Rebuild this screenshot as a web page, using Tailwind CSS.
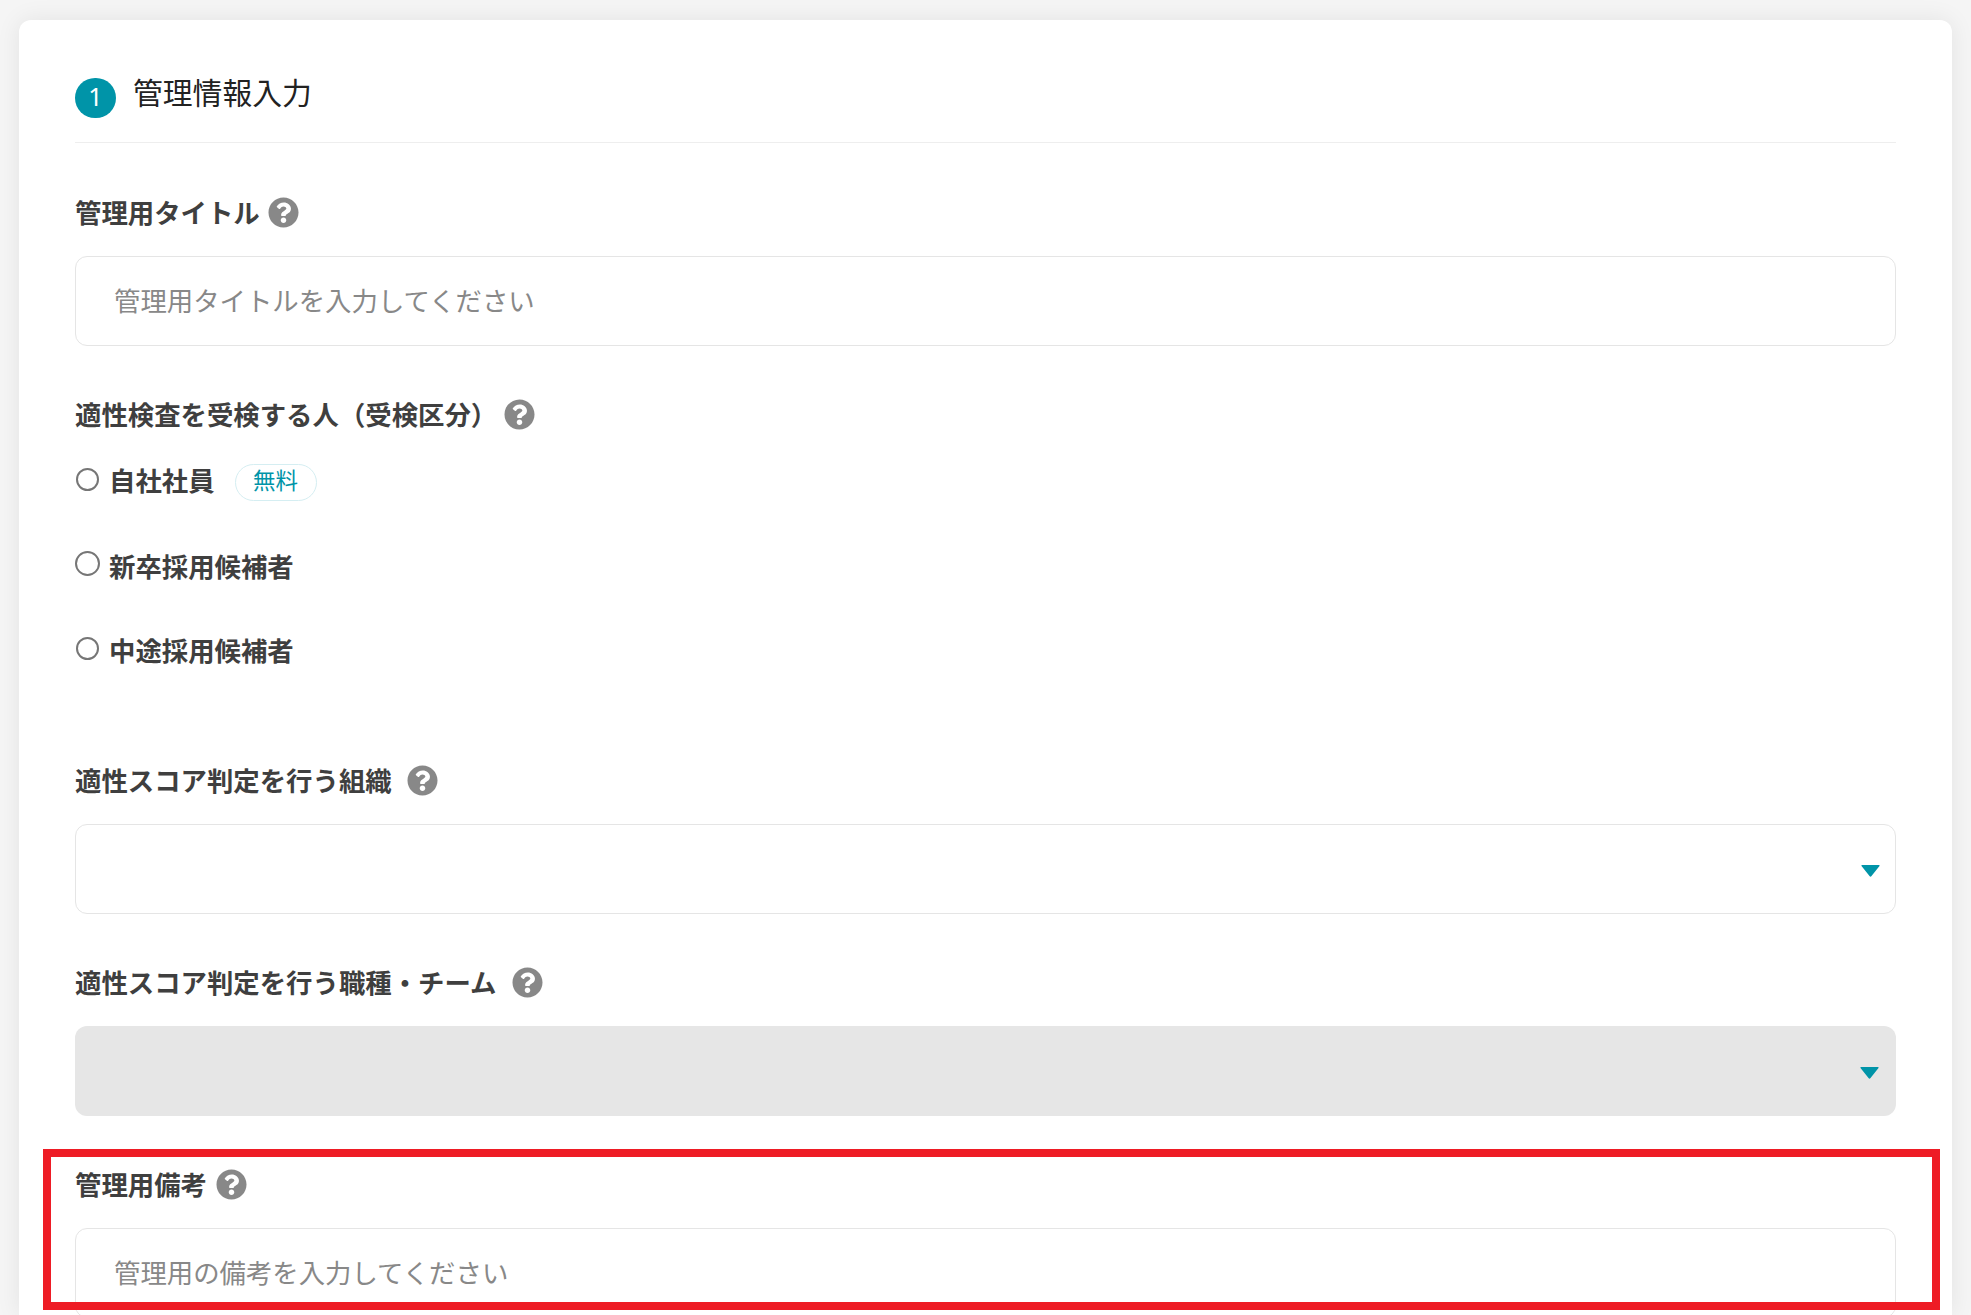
<!DOCTYPE html>
<html lang="ja">
<head>
    <meta charset="UTF-8">
    <meta name="viewport" content="width=device-width, initial-scale=1.0">
    <title>管理情報入力</title>
    <script src="https://cdn.jsdelivr.net/npm/@tailwindcss/browser@4"></script>
</head>
<body class="relative h-[1315px] overflow-hidden bg-[#f5f5f5] font-['Noto_Sans_CJK_JP','Noto_Sans',sans-serif] text-[#3f3f3f]">
    <main class="ml-[19px] mt-[20px] w-[1933px] h-[1295px] overflow-hidden rounded-t-[12px] bg-white px-[56px] pt-[58px] shadow-[0_0_24px_rgba(0,0,0,0.08)]">

        <!-- Section heading -->
        <div class="flex h-[65px] items-start border-b border-[#eeeeee]">
            <span class="flex h-[40px] w-[41px] items-center justify-center rounded-full bg-[#0094a8] pb-[4px] font-['Noto_Sans',sans-serif] text-[25px] leading-none text-white">1</span>
            <h2 class="ml-[17px] -mt-[7px] text-[29.8px] leading-[40px] font-normal text-[#222]">管理情報入力</h2>
        </div>

        <!-- Title -->
        <div class="mt-[54px] flex h-[30px] items-center">
            <label class="text-[26.4px] leading-[30px] font-bold">管理用タイトル</label>
            <svg class="ml-[8px] h-[31px] w-[31px] fill-[#888]" viewBox="0 0 512 512"><path d="M504 256c0 136.997-111.043 248-248 248S8 392.997 8 256C8 119.083 119.043 8 256 8s248 111.083 248 248zM262.655 90c-54.497 0-89.255 22.957-116.549 63.758-3.536 5.286-2.353 12.415 2.715 16.258l34.699 26.31c5.205 3.947 12.621 3.008 16.665-2.122 17.864-22.658 30.113-35.797 57.303-35.797 20.429 0 45.698 13.148 45.698 32.958 0 14.976-12.363 22.667-32.534 33.976C247.128 238.528 216 254.941 216 296v4c0 6.627 5.373 12 12 12h56c6.627 0 12-5.373 12-12v-1.333c0-28.462 83.186-29.647 83.186-106.667 0-58.002-60.165-102-116.531-102zM256 338c-25.365 0-46 20.635-46 46 0 25.364 20.635 46 46 46s46-20.636 46-46c0-25.365-20.635-46-46-46z"/></svg>
        </div>
        <input type="text" placeholder="管理用タイトルを入力してください" class="mt-[29px] block h-[90px] w-full rounded-[12px] border-[1.5px] border-[#e5e5e5] bg-white px-[38px] pb-[4px] text-[26.4px] placeholder:text-[#888]">

        <!-- Examinee type -->
        <div class="mt-[53px] flex h-[30px] items-center">
            <label class="text-[26.4px] leading-[30px] font-bold">適性検査を受検する人（受検区分）</label>
            <svg class="ml-[7px] h-[31px] w-[31px] fill-[#888]" viewBox="0 0 512 512"><path d="M504 256c0 136.997-111.043 248-248 248S8 392.997 8 256C8 119.083 119.043 8 256 8s248 111.083 248 248zM262.655 90c-54.497 0-89.255 22.957-116.549 63.758-3.536 5.286-2.353 12.415 2.715 16.258l34.699 26.31c5.205 3.947 12.621 3.008 16.665-2.122 17.864-22.658 30.113-35.797 57.303-35.797 20.429 0 45.698 13.148 45.698 32.958 0 14.976-12.363 22.667-32.534 33.976C247.128 238.528 216 254.941 216 296v4c0 6.627 5.373 12 12 12h56c6.627 0 12-5.373 12-12v-1.333c0-28.462 83.186-29.647 83.186-106.667 0-58.002-60.165-102-116.531-102zM256 338c-25.365 0-46 20.635-46 46 0 25.364 20.635 46 46 46s46-20.636 46-46c0-25.365-20.635-46-46-46z"/></svg>
        </div>
        <div class="mt-[10px] flex flex-col">
            <div class="flex h-[86px] items-center">
                <span class="ml-[1px] -mt-[6px] h-[23px] w-[23px] rounded-full border-2 border-[#767676]"></span>
                <span class="ml-[10px] -mt-[4px] text-[26.4px] font-bold">自社社員</span>
                <span class="ml-[20px] flex h-[37px] w-[82px] items-center justify-center rounded-full border border-[#d5eef2] pb-[4px] text-[22.5px] text-[#0094a8]">無料</span>
            </div>
            <div class="flex h-[84px] items-center">
                <span class="-mt-[7px] h-[25px] w-[25px] rounded-full border-2 border-[#767676]"></span>
                <span class="ml-[9px] -mt-[2px] text-[26.4px] font-bold">新卒採用候補者</span>
            </div>
            <div class="flex h-[84px] items-center">
                <span class="ml-[1px] -mt-[5px] h-[23px] w-[23px] rounded-full border-2 border-[#767676]"></span>
                <span class="ml-[10px] -mt-[2px] text-[26.4px] font-bold">中途採用候補者</span>
            </div>
        </div>

        <!-- Organisation -->
        <div class="mt-[72px] flex h-[30px] items-center">
            <label class="text-[26.4px] leading-[30px] font-bold">適性スコア判定を行う組織</label>
            <svg class="ml-[15px] h-[31px] w-[31px] fill-[#888]" viewBox="0 0 512 512"><path d="M504 256c0 136.997-111.043 248-248 248S8 392.997 8 256C8 119.083 119.043 8 256 8s248 111.083 248 248zM262.655 90c-54.497 0-89.255 22.957-116.549 63.758-3.536 5.286-2.353 12.415 2.715 16.258l34.699 26.31c5.205 3.947 12.621 3.008 16.665-2.122 17.864-22.658 30.113-35.797 57.303-35.797 20.429 0 45.698 13.148 45.698 32.958 0 14.976-12.363 22.667-32.534 33.976C247.128 238.528 216 254.941 216 296v4c0 6.627 5.373 12 12 12h56c6.627 0 12-5.373 12-12v-1.333c0-28.462 83.186-29.647 83.186-106.667 0-58.002-60.165-102-116.531-102zM256 338c-25.365 0-46 20.635-46 46 0 25.364 20.635 46 46 46s46-20.636 46-46c0-25.365-20.635-46-46-46z"/></svg>
        </div>
        <div class="mt-[29px] flex h-[90px] w-full items-center justify-end rounded-[12px] border-[1.5px] border-[#e5e5e5] bg-white pr-[15.5px]">
            <svg class="mt-[4px] h-[12px] w-[19px] fill-[#0094a8]" viewBox="0 0 19 12"><path d="M1 0h17q1 0 .5 1L10.5 11q-1 1.300-2 0L.5 1Q0 0 1 0z"/></svg>
        </div>

        <!-- Job type / team (disabled) -->
        <div class="mt-[53px] flex h-[30px] items-center">
            <label class="text-[26.4px] leading-[30px] font-bold">適性スコア判定を行う職種・チーム</label>
            <svg class="ml-[16px] h-[31px] w-[31px] fill-[#888]" viewBox="0 0 512 512"><path d="M504 256c0 136.997-111.043 248-248 248S8 392.997 8 256C8 119.083 119.043 8 256 8s248 111.083 248 248zM262.655 90c-54.497 0-89.255 22.957-116.549 63.758-3.536 5.286-2.353 12.415 2.715 16.258l34.699 26.31c5.205 3.947 12.621 3.008 16.665-2.122 17.864-22.658 30.113-35.797 57.303-35.797 20.429 0 45.698 13.148 45.698 32.958 0 14.976-12.363 22.667-32.534 33.976C247.128 238.528 216 254.941 216 296v4c0 6.627 5.373 12 12 12h56c6.627 0 12-5.373 12-12v-1.333c0-28.462 83.186-29.647 83.186-106.667 0-58.002-60.165-102-116.531-102zM256 338c-25.365 0-46 20.635-46 46 0 25.364 20.635 46 46 46s46-20.636 46-46c0-25.365-20.635-46-46-46z"/></svg>
        </div>
        <div class="mt-[29px] flex h-[90px] w-full items-center justify-end rounded-[12px] bg-[#e6e6e6] pr-[17px]">
            <svg class="mt-[4px] h-[12px] w-[19px] fill-[#0094a8]" viewBox="0 0 19 12"><path d="M1 0h17q1 0 .5 1L10.5 11q-1 1.300-2 0L.5 1Q0 0 1 0z"/></svg>
        </div>

        <!-- Note -->
        <div class="mt-[53px] flex h-[30px] items-center">
            <label class="text-[26.4px] leading-[30px] font-bold">管理用備考</label>
            <svg class="ml-[9px] h-[31px] w-[31px] fill-[#888]" viewBox="0 0 512 512"><path d="M504 256c0 136.997-111.043 248-248 248S8 392.997 8 256C8 119.083 119.043 8 256 8s248 111.083 248 248zM262.655 90c-54.497 0-89.255 22.957-116.549 63.758-3.536 5.286-2.353 12.415 2.715 16.258l34.699 26.31c5.205 3.947 12.621 3.008 16.665-2.122 17.864-22.658 30.113-35.797 57.303-35.797 20.429 0 45.698 13.148 45.698 32.958 0 14.976-12.363 22.667-32.534 33.976C247.128 238.528 216 254.941 216 296v4c0 6.627 5.373 12 12 12h56c6.627 0 12-5.373 12-12v-1.333c0-28.462 83.186-29.647 83.186-106.667 0-58.002-60.165-102-116.531-102zM256 338c-25.365 0-46 20.635-46 46 0 25.364 20.635 46 46 46s46-20.636 46-46c0-25.365-20.635-46-46-46z"/></svg>
        </div>
        <input type="text" placeholder="管理用の備考を入力してください" class="mt-[29px] block h-[90px] w-full rounded-[12px] border-[1.5px] border-[#e5e5e5] bg-white px-[38px] pb-[4px] text-[26.4px] placeholder:text-[#888]">
    </main>

    <!-- Red annotation frame drawn over the page -->
    <div class="absolute left-[43px] top-[1149px] h-[161px] w-[1897px] border-[8px] border-[#ee1c25]"></div>
</body>
</html>
